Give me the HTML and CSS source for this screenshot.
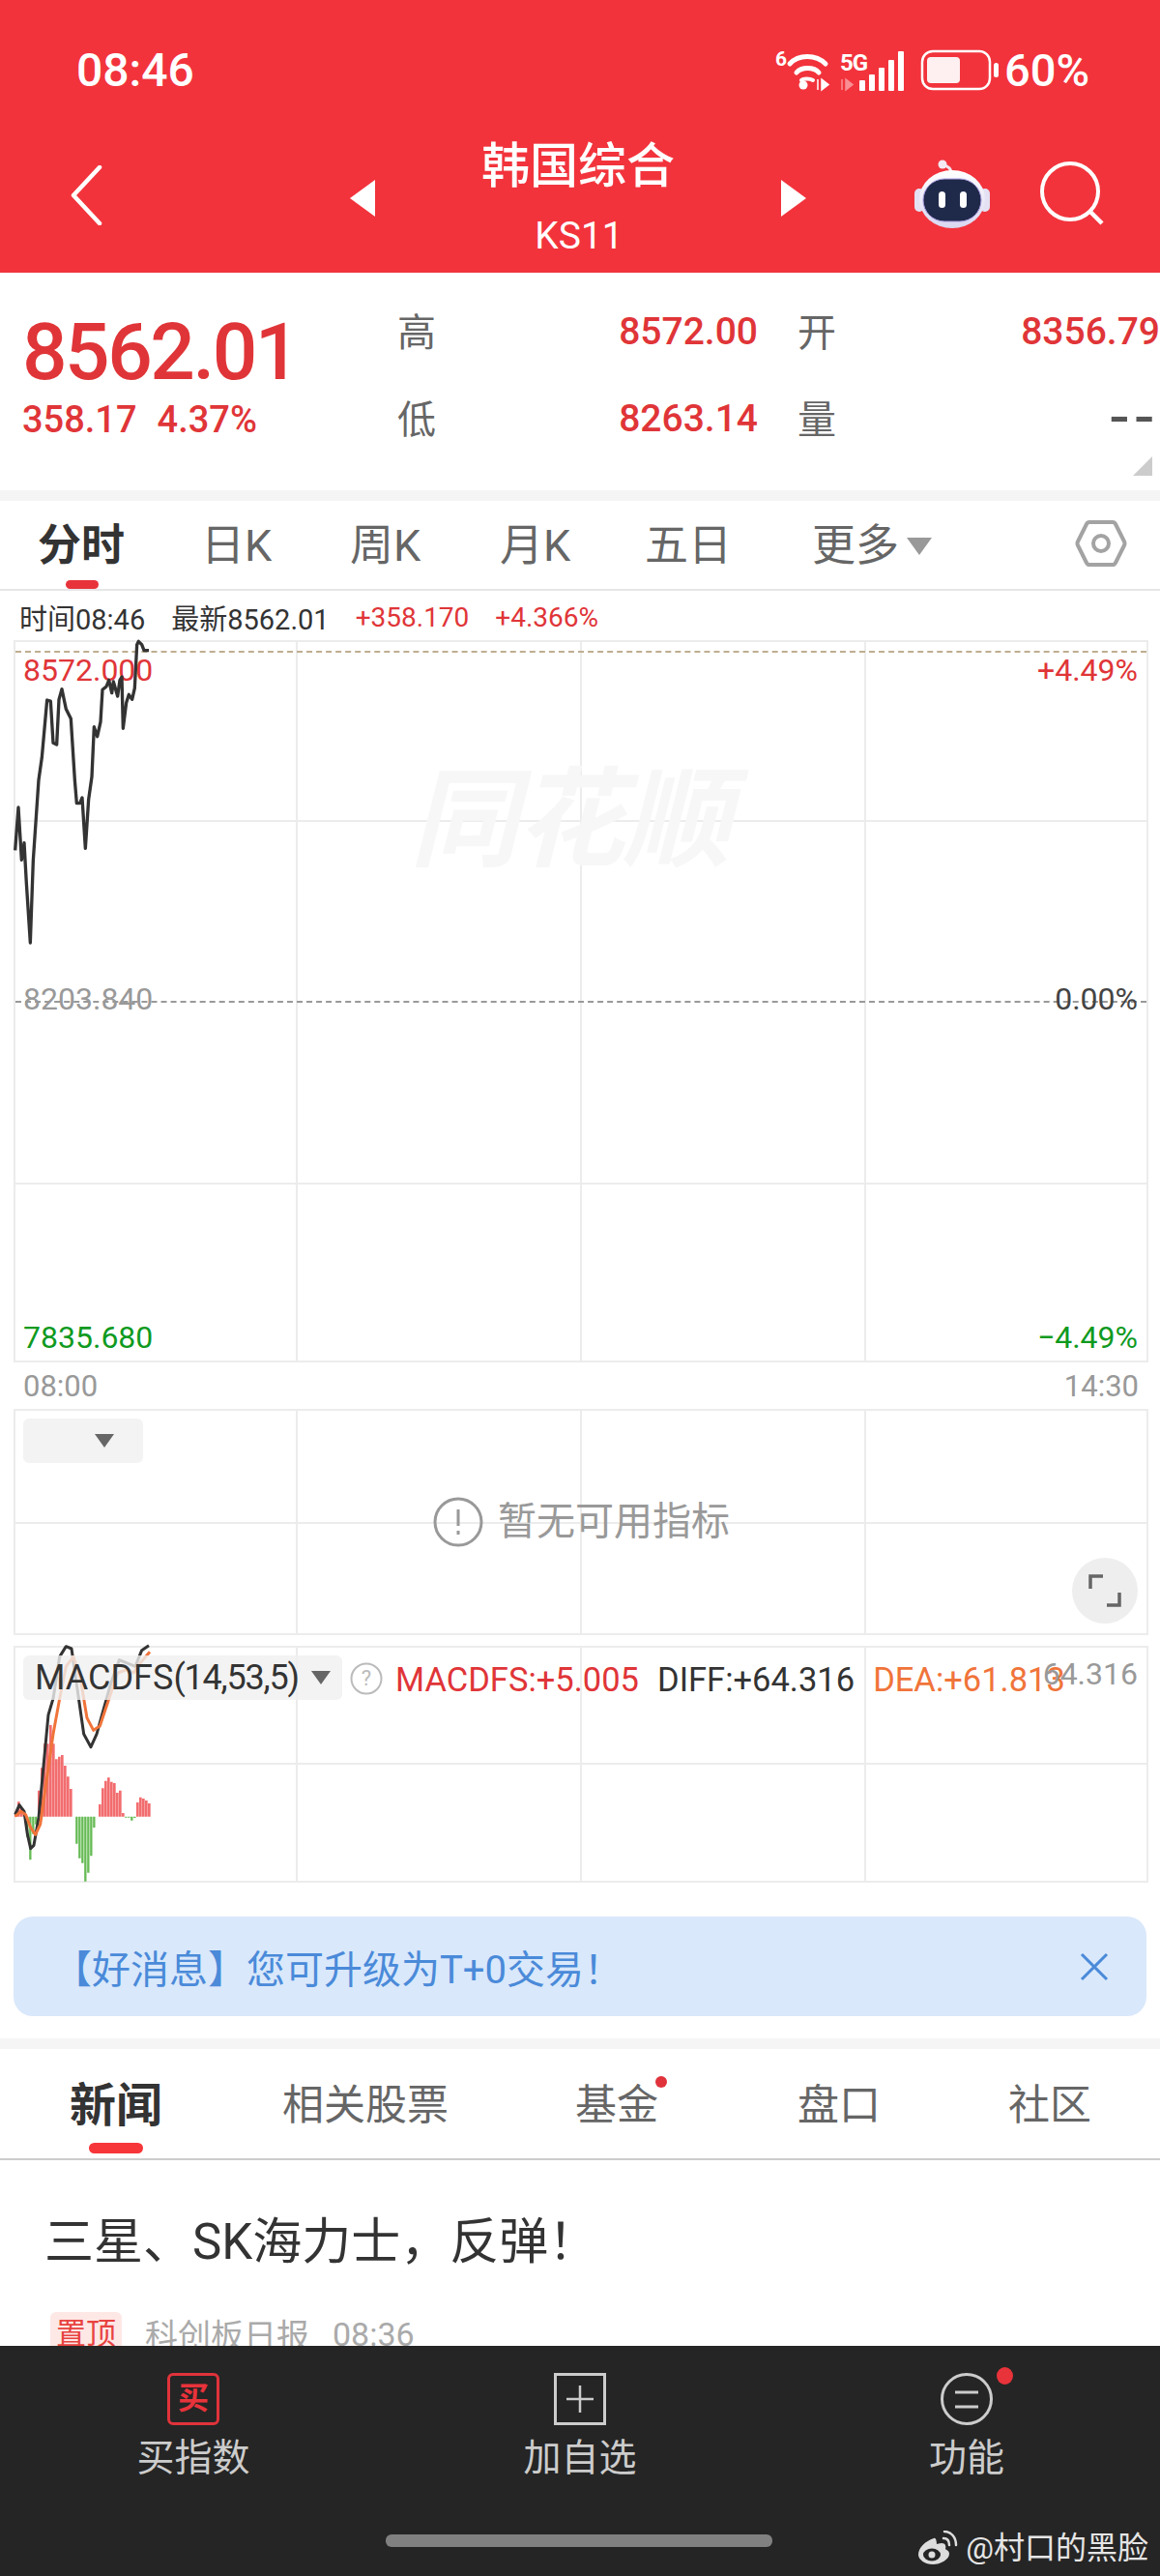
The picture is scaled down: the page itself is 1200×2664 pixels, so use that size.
FILE: index.html
```html
<!DOCTYPE html>
<html lang="zh-CN">
<head>
  <meta charset="UTF-8" />
  <meta name="viewport" content="width=device-width, initial-scale=1.0" />
  <title>韩国综合 KS11</title>
  <link rel="stylesheet" href="styles.css">
</head>
<body>
  <div class="app">
    <header class="top">
      <div class="status">
        <span class="clock">08:46</span>
        <div class="status-right">
          <svg class="status-icons" width="232" height="50" viewBox="800 48 232 50">
            <text x="801" y="68" class="net-small">6</text>
            <g fill="none" stroke="#fff" stroke-width="5" stroke-linecap="round">
              <path d="M816 66c9-10 27-10 37 0" />
              <path d="M823 75c5-6 18-6 23 0" />
              <path d="M828 83c2-2 9-2 12 0" stroke-width="4" />
            </g>
            <circle cx="830" cy="88" r="4.5" fill="#fff" />
            <path d="M845 82v11M849 82v11l7-5.500z" stroke="#fff" stroke-width="1.500" fill="#fff" />
            <text x="868" y="73" class="net-5g">5G</text>
            <path d="M870 82v11M874 82v11l7-5.500z" stroke="#f98f94" stroke-width="1.500" fill="#f98f94" />
            <g fill="#fff">
              <rect x="888" y="83" width="6" height="11" rx="1" />
              <rect x="898" y="77" width="6" height="17" rx="1" />
              <rect x="908" y="70" width="6" height="24" rx="1" />
              <rect x="918" y="62" width="6" height="32" rx="1" />
              <rect x="928" y="53" width="6" height="41" rx="1" />
            </g>
            <rect x="953" y="53" width="70" height="39" rx="11" fill="none" stroke="#fff" stroke-width="2.500" />
            <rect x="958" y="59" width="34" height="27" rx="4" fill="#fff" opacity="0.93" />
            <rect x="1027" y="65" width="5" height="15" rx="2.500" fill="#fff" />
          </svg>
          <span class="battery-text">60%</span>
        </div>
      </div>
      <nav class="nav">
        <svg class="back" width="34" height="62" viewBox="0 0 34 62"><path d="M31 2 4 31l27 29" fill="none" stroke="#fff" stroke-width="4.500" stroke-linecap="round" stroke-linejoin="round" /></svg>
        <span class="tri tri-left"></span>
        <div class="title">
          <div class="title-name">韩国综合</div>
          <div class="title-code">KS11</div>
        </div>
        <span class="tri tri-right"></span>
        <svg class="robot" width="78" height="72" viewBox="0 0 78 72">
          <defs>
            <linearGradient id="head" x1="0" y1="0" x2="0" y2="1">
              <stop offset="0" stop-color="#fff" />
              <stop offset="1" stop-color="#d9d6f0" />
            </linearGradient>
          </defs>
          <path d="M38 14c0-4-2-7-8-8" fill="none" stroke="#f1e6f0" stroke-width="3" stroke-linecap="round" />
          <circle cx="29" cy="5" r="4.500" fill="#f4e9f2" />
          <rect x="0" y="30" width="10" height="24" rx="5" fill="#e4e1f3" />
          <rect x="68" y="30" width="10" height="24" rx="5" fill="#e4e1f3" />
          <ellipse cx="39" cy="41" rx="34" ry="30" fill="url(#head)" />
          <rect x="9" y="20" width="60" height="44" rx="22" fill="#1f2a4a" stroke="#a99be0" stroke-width="1" />
          <rect x="25" y="33" width="7" height="17" rx="3.500" fill="#fff" />
          <rect x="47" y="33" width="7" height="17" rx="3.500" fill="#fff" />
        </svg>
        <svg class="search" width="66" height="66" viewBox="0 0 66 66">
          <circle cx="31" cy="31" r="29" fill="none" stroke="#fff" stroke-width="4" />
          <path d="M52 52 64 64" stroke="#fff" stroke-width="4.500" />
        </svg>
      </nav>
    </header>

    <section class="quote">
      <div class="quote-main">
        <div class="price">8562.01</div>
        <div class="change"><span>358.17</span><span>4.37%</span></div>
      </div>
      <div class="quote-grid">
        <span class="q-label">高</span><span class="q-val">8572.00</span>
        <span class="q-label q-label-2">开</span><span class="q-val">8356.79</span>
        <span class="q-label">低</span><span class="q-val">8263.14</span>
        <span class="q-label q-label-2">量</span><span class="q-val q-none">--</span>
      </div>
      <span class="quote-corner"></span>
    </section>

    <div class="strip"></div>

    <div class="period-tabs">
      <span class="period active">分时</span>
      <span class="period">日K</span>
      <span class="period">周K</span>
      <span class="period">月K</span>
      <span class="period">五日</span>
      <span class="period period-more">更多<i class="more-tri"></i></span>
      <svg class="hex" width="54" height="50" viewBox="0 0 54 50">
        <path d="M15 3h24q2 0 3 2l9 18q1 2 0 4l-9 18q-1 2-3 2H15q-2 0-3-2L3 27q-1-2 0-4l9-18q1-2 3-2z" fill="none" stroke="#a3a3a3" stroke-width="4" />
        <circle cx="27" cy="25" r="8" fill="none" stroke="#a3a3a3" stroke-width="4" />
      </svg>
    </div>

    <div class="tick-info">
      <span>时间08:46</span>
      <span class="tick-new">最新8562.01</span>
      <span class="up tick-a">+358.170</span>
      <span class="up tick-b">+4.366%</span>
    </div>

    <div class="chart chart-main">
      <div class="cell"></div><div class="cell"></div><div class="cell"></div><div class="cell"></div>
      <div class="cell"></div><div class="cell"></div><div class="cell"></div><div class="cell"></div>
      <div class="cell cell-mid"></div><div class="cell cell-mid"></div><div class="cell cell-mid"></div><div class="cell cell-mid"></div>
      <div class="cell"></div><div class="cell"></div><div class="cell"></div><div class="cell"></div>
      <div class="brand">同花顺</div>
      <div class="high-line"></div>
      <div class="mid-line"></div>
      <span class="axis left up row-high">8572.000</span>
      <span class="axis right up row-high">+4.49%</span>
      <span class="axis left flat row-mid">8203.840</span>
      <span class="axis right flat-dark row-mid">0.00%</span>
      <span class="axis left down row-low">7835.680</span>
      <span class="axis right down row-low">−4.49%</span>
      <svg class="plot plot-price" width="400" height="500" viewBox="0 0 1200 1500">
        <polyline fill="none" stroke="#333" stroke-width="10" stroke-linejoin="round" points="47,1078 57,945 67,1108 75,1055 82,1180 94,1365 103,1110 120,860 130,790 146,612 157,615 165,745 176,750 183,610 192,578 205,640 220,670 232,860 238,932 248,932 255,915 265,1072 275,920 285,850 292,695 302,725 312,680 318,580 330,570 338,550 347,590 352,555 365,600 372,550 378,540 382,700 392,620 400,595 410,610 418,575 425,440 430,430 440,440 447,458 462,458" />
      </svg>
    </div>

    <div class="time-axis"><span>08:00</span><span>14:30</span></div>

    <div class="chart chart-sub">
      <div class="cell"></div><div class="cell"></div><div class="cell"></div><div class="cell"></div>
      <div class="cell"></div><div class="cell"></div><div class="cell"></div><div class="cell"></div>
      <div class="picker picker-empty"><i class="picker-tri"></i></div>
      <div class="no-data">
        <svg width="52" height="52" viewBox="0 0 52 52">
          <circle cx="26" cy="26" r="24" fill="none" stroke="#999" stroke-width="3" />
          <path d="M26 13v17M26 35v4" stroke="#999" stroke-width="3" />
        </svg>
        <span>暂无可用指标</span>
      </div>
      <div class="expand">
        <svg width="34" height="34" viewBox="0 0 34 34">
          <path d="M15 2H2v13M19 32h13V19" fill="none" stroke="#666" stroke-width="3.500" />
        </svg>
      </div>
    </div>

    <div class="chart chart-macd">
      <div class="cell"></div><div class="cell"></div><div class="cell"></div><div class="cell"></div>
      <div class="cell"></div><div class="cell"></div><div class="cell"></div><div class="cell"></div>
      <svg class="plot plot-macd" width="400" height="320" viewBox="0 0 1200 960">
        <path fill="none" stroke="#f26d6f" stroke-width="8" d="M49 656V640M58 656V610M67 656V630M76 656V645M121 656V575M130 656V505M139 656V430M148 656V430M157 656V372M166 656V430M175 656V478M184 656V470M193 656V465M202 656V498M211 656V532M220 656V570M310 656V618M319 656V568M328 656V545M337 656V535M346 656V548M355 656V552M364 656V582M373 656V575M382 656V645M427 656V612M436 656V596M445 656V600M454 656V606M463 656V615" />
        <path fill="none" stroke="#66bb55" stroke-width="7" d="M85 656V720M94 656V790M103 656V710M112 656V680M238 656V740M247 656V785M256 656V800M265 656V857M274 656V830M283 656V778M292 656V690M391 656V659M400 656V659M409 656V668M418 656V660" />
        <polyline fill="none" stroke="#333" stroke-width="9" stroke-linejoin="round" points="47,650 60,620 75,640 85,710 95,755 105,745 120,660 135,500 150,340 165,290 185,160 205,128 222,135 240,260 260,400 282,440 300,400 325,310 345,240 370,170 420,190 440,140 462,125" />
        <polyline fill="none" stroke="#f0743a" stroke-width="9" stroke-linejoin="round" points="47,655 65,640 80,650 95,690 110,712 125,680 145,540 165,400 185,290 205,190 228,160 250,230 270,350 290,388 310,375 335,300 365,210 395,200 415,210 435,180 465,145" />
      </svg>
      <div class="picker picker-macd">MACDFS<span class="params">(14,53,5)</span><i class="picker-tri"></i></div>
      <svg class="help" width="34" height="34" viewBox="0 0 34 34">
        <circle cx="17" cy="17" r="15.500" fill="none" stroke="#bbb" stroke-width="2" />
        <text x="17" y="24" class="help-mark">?</text>
      </svg>
      <div class="macd-values">
        <span class="up">MACDFS:+5.005</span>
        <span class="diff">DIFF:+64.316</span>
        <span class="dea">DEA:+61.813</span>
      </div>
      <span class="macd-scale">64.316</span>
    </div>

    <div class="banner">
      <span>【好消息】您可升级为T+0交易！</span>
      <svg width="32" height="32" viewBox="0 0 32 32"><path d="M3 3l26 26M29 3 3 29" stroke="#4a8ad9" stroke-width="3" /></svg>
    </div>

    <div class="strip strip-news"></div>

    <div class="news-tabs">
      <span class="news-tab active">新闻</span>
      <span class="news-tab">相关股票</span>
      <span class="news-tab has-dot">基金</span>
      <span class="news-tab">盘口</span>
      <span class="news-tab">社区</span>
    </div>

    <article class="news">
      <h2>三星、SK海力士，反弹！</h2>
      <div class="news-meta">
        <span class="pin">置顶</span>
        <span>科创板日报</span>
        <span>08:36</span>
      </div>
    </article>

    <footer class="bottom">
      <div class="actions">
        <div class="action">
          <div class="buy-icon">买</div>
          <span>买指数</span>
        </div>
        <div class="action">
          <svg width="54" height="54" viewBox="0 0 54 54">
            <rect x="1.500" y="1.500" width="51" height="51" fill="none" stroke="#ccc" stroke-width="3" />
            <path d="M27 13v28M13 27h28" stroke="#ccc" stroke-width="2.500" />
          </svg>
          <span>加自选</span>
        </div>
        <div class="action action-dot">
          <svg width="54" height="54" viewBox="0 0 54 54">
            <circle cx="27" cy="27" r="25.500" fill="none" stroke="#ccc" stroke-width="3" />
            <path d="M15 20h24M15 35h24" stroke="#ccc" stroke-width="3" />
          </svg>
          <span>功能</span>
        </div>
      </div>
      <div class="home-bar"></div>
      <div class="mark">
        <svg width="42" height="36" viewBox="0 0 42 36">
          <path d="M17 8C8 11 1 18 1 25c0 5 7 10 15 10s17-5 17-11c0-3-3-4-4-5 1-3 0-6-4-6-2 0-4 1-5 1 0-3-1-7-3-6z" fill="#ddd" />
          <ellipse cx="15" cy="25" rx="9" ry="6.500" fill="#252525" />
          <circle cx="15" cy="25" r="3.500" fill="#ddd" />
          <path d="M27 8c4 0 6 3 6 7M28 1c7 0 12 6 12 14" fill="none" stroke="#ddd" stroke-width="2.500" stroke-linecap="round" />
        </svg>
        <span>@村口的黑脸</span>
      </div>
    </footer>
  </div>
</body>
</html>
```

FILE: styles.css
```css
* {
  box-sizing: border-box;
}

body {
  margin: 0;
  background: #fff;
  font-family: Roboto, "Noto Sans CJK SC", sans-serif;
  color: #333;
}

.app {
  width: 1200px;
  height: 2664px;
  display: flex;
  flex-direction: column;
  overflow: hidden;
}

/* header */
.top {
  height: 282px;
  flex: none;
  background: #f2333c;
  color: #fff;
}

.status {
  height: 130px;
  padding: 48px 73px 0 79px;
  display: flex;
  justify-content: space-between;
  align-items: flex-start;
}

.clock {
  font-size: 48px;
  font-weight: 500;
  line-height: 50px;
}

.status-right {
  display: flex;
  gap: 6px;
  align-items: flex-start;
}

.status-icons {
  display: block;
}

.net-small {
  font: 700 21px Roboto, sans-serif;
  fill: #fff;
}

.net-5g {
  font: 700 24px Roboto, sans-serif;
  fill: #fff;
  letter-spacing: -1px;
}

.battery-text {
  font-size: 47px;
  font-weight: 500;
  line-height: 50px;
}

.nav {
  height: 152px;
  display: grid;
  grid-template-columns: 362px 26px 1fr 26px 112px 78px 52px 66px 58px;
  align-items: center;
}

.back {
  margin-left: 72px;
  margin-top: -8px;
}

.tri {
  width: 0;
  height: 0;
  border-top: 19px solid transparent;
  border-bottom: 19px solid transparent;
  margin-top: -2px;
}

.tri-left {
  border-right: 26px solid #fff;
}

.tri-right {
  border-left: 26px solid #fff;
}

.title {
  text-align: center;
  margin-top: -4px;
}

.title-name {
  font-size: 50px;
  font-weight: 500;
  line-height: 60px;
}

.title-code {
  font-size: 39px;
  line-height: 44px;
  margin-top: 20px;
  padding-left: 2px;
}

.robot {
  grid-column: 6;
  margin-top: -10px;
}

.search {
  grid-column: 8;
  margin-top: -12px;
}

/* quote */
.quote {
  height: 225px;
  flex: none;
  display: flex;
  position: relative;
  padding: 37px 0 0 23px;
}

.quote-main {
  width: 388px;
  flex: none;
  color: #e03538;
}

.price {
  font-size: 82px;
  font-weight: 500;
  line-height: 90px;
  letter-spacing: -2.5px;
}

.change {
  display: flex;
  gap: 21px;
  font-size: 38px;
  font-weight: 500;
  line-height: 46px;
  margin-top: 2px;
}

.quote-grid {
  flex: 1;
  display: grid;
  grid-template-columns: 40px 333px 81px 335px;
  grid-auto-rows: 90px;
  align-items: center;
  height: 180px;
  margin-top: -23px;
}

.q-label {
  font-size: 40px;
  color: #666;
}

.q-label-2 {
  padding-left: 41px;
}

.q-val {
  font-size: 39px;
  font-weight: 500;
  color: #e03538;
  text-align: right;
  padding-top: 4px;
}

.q-none {
  color: #555;
  font-size: 68px;
  font-weight: 400;
  line-height: 60px;
  letter-spacing: 7px;
  padding-top: 0;
}

.quote-corner {
  position: absolute;
  right: 8px;
  bottom: 15px;
  width: 0;
  height: 0;
  border-left: 20px solid transparent;
  border-bottom: 20px solid #ccc;
}

.strip {
  height: 11px;
  flex: none;
  background: #f5f5f5;
}

/* period tabs */
.period-tabs {
  height: 93px;
  flex: none;
  position: relative;
  display: flex;
  align-items: center;
  border-bottom: 2px solid #e6e6e6;
  padding-left: 39px;
  padding-bottom: 6px;
}

.period {
  font-size: 45px;
  color: #666;
  white-space: nowrap;
}

.period:nth-child(1) { width: 169px; }
.period:nth-child(2) { width: 154px; }
.period:nth-child(3) { width: 155px; }
.period:nth-child(4) { width: 150px; }
.period:nth-child(5) { width: 173px; }

.period.active {
  color: #333;
  font-weight: 700;
}

.period.active::after {
  content: "";
  position: absolute;
  left: 68px;
  bottom: 0;
  width: 34px;
  height: 9px;
  border-radius: 5px;
  background: #e8333b;
}

.more-tri {
  display: inline-block;
  margin-left: 8px;
  border-left: 13px solid transparent;
  border-right: 13px solid transparent;
  border-top: 18px solid #999;
  vertical-align: 6px;
}

.hex {
  margin: 2px 34px 0 auto;
}

.tick-info {
  height: 51px;
  flex: none;
  display: flex;
  align-items: center;
  padding: 3px 0 0 20px;
  font-size: 29px;
  white-space: nowrap;
}

.tick-new { margin-left: 27px; }
.tick-a { margin-left: 27px; font-size: 28px; }
.tick-b { margin-left: 27px; font-size: 28px; }

.up { color: #e03538; }
.down { color: #0f9a1f; }
.flat { color: #999; }
.flat-dark { color: #444; }

/* charts */
.chart {
  flex: none;
  width: 1174px;
  margin-left: 14px;
  position: relative;
  display: grid;
  grid-template-columns: 290px 294px 294px 292px;
  border: 2px solid #ececec;
}

.cell {
  border-left: 2px solid #ececec;
  border-top: 2px solid #ececec;
}

.cell:nth-child(4n + 1) { border-left: 0; }

.chart-main {
  height: 747px;
  grid-template-rows: 184px 187px 188px 1fr;
}

.chart-main .cell:nth-child(-n + 4),
.chart-sub .cell:nth-child(-n + 4),
.chart-macd .cell:nth-child(-n + 4) {
  border-top: 0;
}

.chart-main .cell-mid { border-top: 0; }

.brand {
  position: absolute;
  left: 408px;
  top: 120px;
  font-size: 112px;
  line-height: 130px;
  font-weight: 700;
  font-style: italic;
  letter-spacing: -2px;
  color: #f7f7f7;
}

.high-line,
.mid-line {
  position: absolute;
  left: 0;
  right: 0;
  height: 0;
}

.high-line {
  top: 9px;
  border-top: 2px dashed #bfae90;
}

.mid-line {
  top: 371px;
  border-top: 2px dashed #999;
}

.axis {
  position: absolute;
  font-size: 32px;
  line-height: 36px;
}

.axis.left { left: 8px; }
.axis.right { right: 9px; }
.row-high { top: 11px; }
.row-mid { top: 351px; }
.row-low { top: 701px; }

.plot {
  position: absolute;
  display: block;
  left: -16px;
  overflow: hidden;
}

.plot-price { top: -144px; overflow: visible; }
.plot-macd { top: -44px; }

.time-axis {
  height: 48px;
  flex: none;
  display: flex;
  justify-content: space-between;
  align-items: center;
  padding: 0 22px 0 24px;
  font-size: 31px;
  color: #999;
}

.chart-sub {
  height: 234px;
  grid-template-rows: 1fr 1fr;
}

.chart-macd {
  height: 245px;
  margin-top: 11px;
  grid-template-rows: 119px 1fr;
}

.picker {
  position: absolute;
  left: 8px;
  top: 8px;
  height: 46px;
  border-radius: 6px;
  background: rgba(240, 240, 240, 0.8);
  display: flex;
  align-items: center;
  white-space: nowrap;
}

.picker-empty {
  width: 124px;
  justify-content: flex-end;
  padding-right: 30px;
}

.picker-macd {
  width: 330px;
  padding-left: 12px;
  font-size: 36px;
  color: #333;
}

.params {
  letter-spacing: -1.200px;
}

.picker-tri {
  border-left: 10px solid transparent;
  border-right: 10px solid transparent;
  border-top: 14px solid #666;
}

.picker-macd .picker-tri {
  margin-left: 13px;
}

.no-data {
  position: absolute;
  left: 432px;
  top: 89px;
  display: flex;
  align-items: center;
  gap: 15px;
  font-size: 40px;
  line-height: 52px;
  color: #999;
}

.no-data svg {
  display: block;
}

.expand {
  position: absolute;
  right: 9px;
  bottom: 10px;
  width: 68px;
  height: 68px;
  border-radius: 50%;
  background: #eee;
  display: flex;
  align-items: center;
  justify-content: center;
}

.help {
  position: absolute;
  left: 346px;
  top: 15px;
}

.help-mark {
  font: 22px Roboto, sans-serif;
  fill: #bbb;
  text-anchor: middle;
}

.macd-values {
  position: absolute;
  left: 393px;
  top: 13px;
  display: flex;
  gap: 19px;
  font-size: 34.500px;
  line-height: 40px;
  white-space: nowrap;
}

.diff { color: #333; }
.dea { color: #f0743a; }

.macd-scale {
  position: absolute;
  right: 9px;
  top: 7px;
  font-size: 32px;
  line-height: 40px;
  color: #999;
}

/* banner */
.banner {
  flex: none;
  width: 1172px;
  height: 103px;
  margin: 35px 0 23px 14px;
  padding: 0 38px 0 41px;
  border-radius: 20px;
  background: #d9e8fb;
  color: #4a8ad9;
  font-size: 40px;
  display: flex;
  align-items: center;
  justify-content: space-between;
}

.strip-news {
  height: 11px;
}

/* news */
.news-tabs {
  height: 115px;
  flex: none;
  border-bottom: 2px solid #ccc;
  padding-bottom: 6px;
  display: flex;
  align-items: center;
  padding-left: 72px;
}

.news-tab {
  font-size: 43px;
  color: #666;
  position: relative;
  white-space: nowrap;
}

.news-tab:nth-child(1) { width: 220px; }
.news-tab:nth-child(2) { width: 303px; }
.news-tab:nth-child(3) { width: 230px; }
.news-tab:nth-child(4) { width: 218px; }

.news-tab.active {
  font-size: 48px;
  font-weight: 700;
  color: #333;
}

.news-tab.active::after {
  content: "";
  position: absolute;
  left: 20px;
  top: 78px;
  width: 56px;
  height: 11px;
  border-radius: 6px;
  background: #f7363a;
}

.news-tab.has-dot::after {
  content: "";
  position: absolute;
  left: 83px;
  top: 5px;
  width: 12px;
  height: 12px;
  border-radius: 50%;
  background: #e0333b;
}

.news {
  flex: 1;
  min-height: 0;
  overflow: hidden;
  padding: 50px 46px 0;
}

.news h2 {
  margin: 0;
  font-size: 51px;
  font-weight: 400;
  line-height: 70px;
  color: #333;
}

.news-meta {
  margin-top: 35px;
  margin-left: 6px;
  display: flex;
  align-items: center;
  gap: 24px;
  font-size: 34px;
  color: #aaa;
}

.pin {
  width: 74px;
  height: 46px;
  border-radius: 6px;
  background: #fde8e6;
  color: #e8423f;
  font-size: 31px;
  text-align: center;
  line-height: 46px;
}

/* bottom bar */
.bottom {
  height: 238px;
  flex: none;
  background: #252525;
  color: #ccc;
  position: relative;
}

.actions {
  display: flex;
  padding-top: 28px;
}

.action {
  flex: 1;
  display: flex;
  flex-direction: column;
  align-items: center;
  position: relative;
  font-size: 39px;
  line-height: 50px;
  gap: 9px;
}

.action svg {
  display: block;
}

.buy-icon {
  width: 54px;
  height: 54px;
  border: 3px solid #e0333b;
  border-radius: 6px;
  color: #e8333b;
  font-size: 32px;
  font-weight: 700;
  line-height: 46px;
  text-align: center;
}

.action-dot::after {
  content: "";
  position: absolute;
  left: 231px;
  top: -6px;
  width: 17px;
  height: 18px;
  border-radius: 50%;
  background: #e8333b;
}

.home-bar {
  position: absolute;
  left: 399px;
  top: 195px;
  width: 400px;
  height: 13px;
  border-radius: 6px;
  background: #808080;
}

.mark {
  position: absolute;
  right: 12px;
  top: 187px;
  display: flex;
  align-items: center;
  gap: 8px;
  font-size: 32px;
  line-height: 44px;
  color: #e5e5e5;
}
```
